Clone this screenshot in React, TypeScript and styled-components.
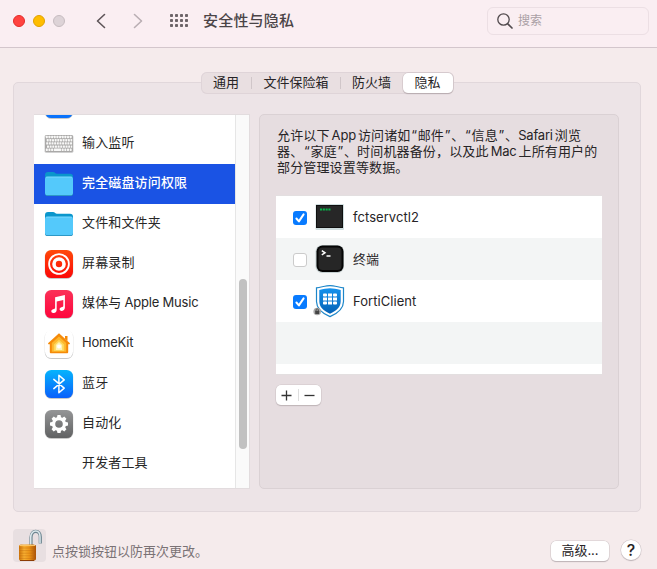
import React from "react";
import styled, { createGlobalStyle, css } from "styled-components";

const GlobalStyle = createGlobalStyle`
  * { box-sizing: border-box; }
  html, body { margin: 0; padding: 0; }
  body {
    font-family: Inter, "Noto Sans CJK SC", sans-serif;
    font-size: 13px;
    line-height: 16px;
    color: #272426;
    overflow: hidden;
  }
  svg { display: block; flex: none; }
  button { font: inherit; color: inherit; border: 0; padding: 0; margin: 0; }
`;

const Window = styled.div`
  width: 657px;
  height: 569px;
  display: flex;
  flex-direction: column;
  background: #f5ebec;
`;

const TitleBar = styled.header`
  height: 48px;
  flex: none;
  display: flex;
  align-items: center;
  padding: 0 8px 6px 13px;
  background: #faeef2;
  border-bottom: 1px solid #d3c6cc;
`;

const Lights = styled.div`
  display: flex;
  gap: 8px;
  margin-right: 31px;
`;

const Light = styled.span<{ $fill: string; $edge: string }>`
  width: 12px;
  height: 12px;
  border-radius: 50%;
  background: ${(p) => p.$fill};
  border: 1px solid ${(p) => p.$edge};
`;

const NavArrows = styled.nav`
  display: flex;
  gap: 27px;
  margin-right: 27px;
`;

const Title = styled.h1`
  margin: 0 auto 0 15px;
  font-size: 15px;
  line-height: 20px;
  font-weight: 500;
  letter-spacing: 0.2px;
  color: #4a4447;
`;

const Search = styled.label`
  width: 162px;
  height: 28px;
  display: flex;
  align-items: center;
  gap: 5px;
  padding-left: 9px;
  border: 1px solid #ecdfe4;
  border-radius: 6px;
  color: #aaa0a5;
  font-size: 12px;
`;

const Content = styled.main`
  flex: none;
  display: flex;
  flex-direction: column;
  padding: 24px 16px 0 13px;
`;

const Tabs = styled.div`
  position: relative;
  z-index: 1;
  align-self: flex-start;
  display: flex;
  width: 253px;
  height: 22px;
  margin: 0 0 -12px 188px;
  padding: 1px 0;
  border-radius: 6px;
  background: #e9dfe1;
  box-shadow: inset 0 0 0 1px #dfd4d8;
`;

const Tab = styled.button<{ $width: number; $active?: boolean; $divider?: boolean }>`
  position: relative;
  width: ${(p) => p.$width}px;
  height: 20px;
  padding-right: 1px;
  line-height: 18px;
  padding-bottom: 2px;
  text-align: center;
  background: none;
  border-radius: 5px;
  ${(p) =>
    p.$active &&
    css`
      background: #fff;
      box-shadow: 0 0 0 0.5px #cdc0c4, 0 1px 1px #a49a9e;
    `}
  ${(p) =>
    p.$divider &&
    css`
      &::after {
        content: "";
        position: absolute;
        right: 0;
        top: 4px;
        width: 1px;
        height: 12px;
        background: #d0c6c9;
      }
    `}
`;

const Panel = styled.section`
  display: flex;
  gap: 9px;
  height: 430px;
  padding: 31px 21px 0 20px;
  background: #ede4e7;
  border: 1px solid #e1d7db;
  border-radius: 5px;
`;

const Sidebar = styled.div`
  display: flex;
  width: 216px;
  height: 375px;
  border: 1px solid #e2dcde;
  border-left: 0;
  background: #fff;
`;

const Categories = styled.ul`
  flex: 1;
  height: 100%;
  margin: 0;
  padding: 0;
  list-style: none;
  overflow: hidden;
  display: flex;
  flex-direction: column;
  justify-content: flex-end;
`;

const Category = styled.li<{ $selected?: boolean }>`
  flex: none;
  height: 40px;
  display: flex;
  align-items: center;
  gap: 8px;
  padding-left: 10px;
  background: ${(p) => (p.$selected ? "#1a53e4" : "#fff")};
  color: ${(p) => (p.$selected ? "#fff" : "#272727")};
  font-weight: ${(p) => (p.$selected ? 500 : 400)};
`;

const CategoryIcon = styled.span`
  width: 30px;
  height: 40px;
  display: flex;
  align-items: center;
  justify-content: center;
`;

const CategoryLabel = styled.span`
  padding-bottom: 4px;
  letter-spacing: 0.15px;
  white-space: nowrap;
`;

const ListTail = styled.div`
  flex: none;
  height: 4px;
`;

const ScrollTrack = styled.div`
  width: 14px;
  padding: 164px 2px 0 3px;
  border-left: 1px solid #e6e6e6;
  background: #fafafa;
`;

const ScrollThumb = styled.div`
  width: 8px;
  height: 170px;
  border-radius: 4px;
  background: #c1c1c1;
`;

const Detail = styled.div`
  width: 360px;
  height: 375px;
  padding: 12px 16px 0;
  background: #e6dde0;
  border: 1px solid #dad1d4;
  border-radius: 5px;
  display: flex;
  flex-direction: column;
  align-items: flex-start;
`;

const Description = styled.p`
  margin: 0 0 20px 1px;
  white-space: nowrap;
  font-size: 13px;
  line-height: 16px;
  letter-spacing: 0.15px;
`;

const DescriptionLine = styled.span`
  display: block;
  height: 16px;
`;

const Latin = styled.span<{ $before?: number; $after?: number }>`
  margin: 0 ${(p) => p.$after ?? 0}px 0 ${(p) => p.$before ?? 0}px;
  letter-spacing: -0.2px;
`;

const Quote = styled.span`
  padding: 0 0.65px;
`;

const AppTable = styled.div`
  width: 326px;
  height: 180px;
  border: 1px solid #e3dfe0;
  border-width: 1px 0;
  background: #fff;
`;

const AppRow = styled.div<{ $shaded?: boolean }>`
  height: 42px;
  display: flex;
  align-items: center;
  padding-left: 17px;
  background: ${(p) => (p.$shaded ? "#f3f5f5" : "#fff")};
`;

const Check = styled.span<{ $on?: boolean }>`
  width: 14px;
  height: 14px;
  margin: 2px 6px 0 0;
  border-radius: 3px;
  display: flex;
  align-items: center;
  justify-content: center;
  background: ${(p) => (p.$on ? "#087bff" : "#fff")};
  border: ${(p) => (p.$on ? "0" : "1px solid #cbcbcb")};
`;

const AppIcon = styled.span`
  width: 34px;
  height: 36px;
  display: flex;
  align-items: center;
`;

const AppName = styled.span`
  padding: 0 0 1px 6px;
  letter-spacing: 0.05px;
`;

const AddRemove = styled.div`
  display: flex;
  align-items: center;
  width: 45px;
  height: 20px;
  margin-top: 10px;
  border-radius: 5px;
  background: #fff;
  box-shadow: 0 0 0 0.5px #cfc5c8, 0 1px 1px #aea5a8;
`;

const Glyph = styled.button<{ $divider?: boolean }>`
  width: 23px;
  height: 12px;
  display: flex;
  align-items: center;
  justify-content: center;
  background: none;
  border-right: ${(p) => (p.$divider ? "1px solid #dedede" : "0")};
`;

const Footer = styled.footer`
  display: flex;
  align-items: flex-start;
  padding: 17px 16px 0 13px;
`;

const LockButton = styled.button`
  width: 33px;
  height: 33px;
  background: #e8dfe1;
  border-radius: 4px;
`;

const LockHint = styled.span`
  margin: 14px auto 0 6px;
  color: #7a7275;
`;

const PushButton = styled.button`
  width: 58px;
  height: 20px;
  margin: 12px 12px 0 0;
  padding-bottom: 2px;
  line-height: 18px;
  border-radius: 5px;
  background: #fff;
  box-shadow: 0 0 0 0.5px #cfc5c8, 0 1px 1px #aea5a8;
`;

const HelpButton = styled(PushButton)`
  width: 20px;
  margin: 11px 0 0;
  padding-bottom: 0;
  line-height: 20px;
  border-radius: 50%;
  font-size: 16px;
  font-weight: 500;
`;

const Chevron = ({ flip, color }: { flip?: boolean; color: string }) => (
  <svg width="10" height="16" viewBox="0 0 10 16" fill="none" stroke={color} strokeWidth="1.6" strokeLinecap="round" strokeLinejoin="round">
    <path d={flip ? "M1.500 1.500 8.500 8 1.500 14.500" : "M8.500 1.500 1.500 8 8.500 14.500"} />
  </svg>
);

const GridDots = () => (
  <svg width="18" height="13" viewBox="0 0 18 13" fill="#6d6468">
    {[0, 5, 10].map((y) => [0, 5, 10, 15].map((x) => <rect key={`${x}-${y}`} x={x} y={y} width="3" height="3" rx=".8" />))}
  </svg>
);

const Tile = ({ id, top, bottom, children }: { id: string; top: string; bottom: string; children?: React.ReactNode }) => (
  <svg width="30" height="31" viewBox="0 0 30 31">
    <defs>
      <linearGradient id={id} x1="0" y1="0" x2="0" y2="1">
        <stop stopColor={top} />
        <stop offset="1" stopColor={bottom} />
      </linearGradient>
    </defs>
    <rect x=".6" y="1.4" width="28.8" height="28.6" rx="6.8" fill="#000" opacity=".12" />
    <rect x="1" y="1.8" width="28" height="28" rx="6.3" fill="#000" opacity=".14" />
    <rect x="1" y="1" width="28" height="28" rx="6.3" fill={`url(#${id})`} />
    {children}
  </svg>
);

const Keyboard = () => (
  <svg width="30" height="20" viewBox="0 0 30 20">
    <rect x=".5" y="1" width="29" height="18" rx="1.8" fill="#d2d2d2" />
    <rect x="1" y="1" width="28" height="17" rx="1.5" fill="#aaa9a8" />
    {[0, 1, 2, 3, 4].map((r) =>
      Array.from({ length: 10 }, (_, c) => {
        const shift = [0, 0.9, 0.4, 1.2, 0][r];
        const x = 1.8 + c * 2.65 + shift;
        const wide = r === 4 && c === 3;
        if (r === 4 && c > 3 && c < 6) return null;
        return <rect key={`${r}-${c}`} x={x} y={1.8 + r * 3.2} width={wide ? 7.4 : Math.min(2, 28.2 - x)} height="2.4" rx=".4" fill="#f8f8f7" />;
      }),
    )}
  </svg>
);

const Folder = () => (
  <svg width="30" height="26" viewBox="0 0 30 26">
    <path d="M1 4.200C1 2 2 1 4 1h5c1.700 0 2.200 1.700 4 1.700h13c2 0 3 1 3 3V20H1z" fill="#0a96cc" />
    <path d="M1 8.200c0-1.700.9-2.600 2.600-2.600h22.800c1.700 0 2.600.9 2.600 2.600v14.200c0 1.800-.9 2.700-2.700 2.700H3.700C1.900 25.100 1 24.200 1 22.400z" fill="#2187b5" />
    <path d="M1 8c0-1.700.9-2.500 2.600-2.500h22.800C28.100 5.500 29 6.300 29 8v13.700c0 1.800-.9 2.600-2.700 2.600H3.700C1.900 24.300 1 23.500 1 21.700z" fill="#54c9fb" />
    <path d="M2 6.200h26" stroke="#83dcff" strokeWidth=".7" />
  </svg>
);

const ScreenRecord = () => (
  <Tile id="record" top="#ff4a0a" bottom="#fc0808">
    <circle cx="15" cy="15" r="9.900" fill="none" stroke="#fff" strokeWidth="1.800" />
    <circle cx="15" cy="15" r="5" fill="none" stroke="#fff" strokeWidth="3.600" />
  </Tile>
);

const Music = () => (
  <Tile id="music" top="#fb3158" bottom="#fe063c">
    <path d="M11.100 8.300 20.900 6v12.600c0 2-1.200 3.100-2.900 3.300-1.500.2-2.500-.6-2.400-1.800.1-1.400 1.300-1.900 2.700-2.200.8-.2 1-.5 1-1.200V11l-6.600 1.500v8c0 2.200-1.100 3.300-2.900 3.500-1.600.2-2.600-.6-2.500-1.900.1-1.300 1.300-1.900 2.700-2.200.8-.2 1.100-.5 1.100-1.300z" fill="#fff" />
  </Tile>
);

const HomeKit = () => (
  <Tile id="home" top="#fff" bottom="#fff">
    <path d="M15 4.200 25.700 14c.5.6.1 1.300-.5 1.300h-1V23c0 .8-.5 1.300-1.300 1.300H7.100c-.8 0-1.300-.5-1.300-1.300v-7.700h-1c-.7 0-1-.8-.5-1.300z" fill="#f58a09" />
    <path d="M21 7h2.500v5L21 10z" fill="#f58a09" />
    <path d="m15 7.500 7.200 6.600v8.600H7.800v-8.600z" fill="#fdb72c" />
    <path d="m15 10.800 5.200 4.600v6.500H9.800v-6.500z" fill="#fed65b" />
    <path d="m15 13 3.200 3v5h-6.400v-5z" fill="#fff3b5" />
    <circle cx="15" cy="17.400" r="2" fill="#fff" />
  </Tile>
);

const Bluetooth = () => (
  <Tile id="bluetooth" top="#05b4fd" bottom="#0a60fb">
    <path d="m9.800 10.400 10.400 8.700-5.300 4.700V6.200l5.300 4.700L9.800 19.600" fill="none" stroke="#fff" strokeWidth="1.500" strokeLinejoin="round" strokeLinecap="round" />
  </Tile>
);

const Gear = () => (
  <Tile id="gear" top="#959697" bottom="#616263">
    <g fill="#fff">
      {[0, 45, 90, 135, 180, 225, 270, 315].map((a) => (
        <path key={a} d="M12.800 9 13.500 6h3l.7 3z" transform={`rotate(${a} 15 15)`} />
      ))}
    </g>
    <circle cx="15" cy="15" r="5.400" fill="none" stroke="#fff" strokeWidth="3.200" />
  </Tile>
);

const ExecIcon = () => (
  <svg width="32" height="30" viewBox="0 0 32 30">
    <rect x="2.500" y="2" width="28.500" height="26" rx="1" fill="#a9c3c4" opacity=".55" />
    <rect x="3" y="3" width="27" height="23" fill="#0f0f0f" />
    <rect x="4" y="4" width="25" height="21" fill="#272727" />
    <path d="M7 7.500h11" stroke="#08b54a" strokeWidth="2.200" strokeDasharray="2.100 .7" />
  </svg>
);

const TerminalIcon = () => (
  <svg width="32" height="30" viewBox="0 0 32 30">
    <rect x="2.500" y="1" width="28.500" height="28" rx="6.500" fill="#9fb1b3" opacity=".55" />
    <rect x="3.500" y="1.500" width="27" height="26.500" rx="6" fill="#050505" />
    <rect x="5.500" y="3.500" width="23" height="22.500" rx="4" fill="#262626" />
    <path d="m8.800 6.700 3.200 2.100-3.200 2.100M13.500 12h4" fill="none" stroke="#fff" strokeWidth="1.500" />
  </svg>
);

const FortiIcon = () => (
  <svg width="32" height="36" viewBox="0 0 32 36">
    <defs>
      <linearGradient id="shield" x1="0" y1="0" x2="0" y2="1">
        <stop stopColor="#1592ee" />
        <stop offset="1" stopColor="#0561b4" />
      </linearGradient>
    </defs>
    <path d="M17 2.600c3.500 0 7.500 1.200 13.500 2.200v13.600c0 7-5.300 11.600-13.500 15.200C8.800 30 3.500 25.400 3.500 18.400V4.800C9.500 3.800 13.500 2.600 17 2.600z" fill="#fff" stroke="#1d86c9" strokeWidth="1.200" />
    <path d="M17 5.200c3.300 0 6.400.9 10.700 1.700v11.400c0 5.700-4.100 9.400-10.700 12.500C10.400 27.700 6.300 24 6.300 18.300V6.900C10.600 6.100 13.700 5.200 17 5.200z" fill="url(#shield)" />
    <g fill="#fff">
      {[0, 1, 2].map((r) =>
        [0, 1, 2].map((c) => (
          <rect key={`${r}-${c}`} x={10 + c * 5} y={10.500 + r * 4} width="4" height="3" rx={r !== 1 && c !== 1 ? 0.9 : 0} />
        )),
      )}
    </g>
    <circle cx="4.200" cy="28.500" r="3.800" fill="#a9a9a9" />
    <rect x="2.200" y="27.700" width="4" height="3.300" rx=".5" fill="#444" />
    <path d="M3 28v-1a1.200 1.200 0 0 1 2.400 0v1" fill="none" stroke="#444" strokeWidth=".8" />
  </svg>
);

const OpenLock = () => (
  <svg width="33" height="33" viewBox="0 0 33 33">
    <defs>
      <linearGradient id="brass" x1="0" x2="1">
        <stop stopColor="#ce7309" />
        <stop offset=".3" stopColor="#f7af32" />
        <stop offset=".6" stopColor="#ee9719" />
        <stop offset="1" stopColor="#a85008" />
      </linearGradient>
    </defs>
    <path d="M18 16V8.500C18 4.500 20 2.300 22.700 2.300S27.300 4.500 27.300 8v6.500" fill="none" stroke="#6d8590" strokeWidth="3.200" />
    <path d="M17.700 16V8.500C17.700 4.500 20 2.100 22.700 2.100S27 4.500 27 8v6.300" fill="none" stroke="#dce9ed" strokeWidth="1.500" />
    <path d="M6 17c0-1 1-1.500 3-1.500h10c2.500 0 4 .5 4 1.500v13c0 1.300-2 2-4 2H9c-2 0-3-.7-3-2z" fill="url(#brass)" />
    <path d="M6 19h17M6 21.600h17M6 24.200h17M6 26.800h17M6 29.400h17" stroke="#b9630c" strokeWidth=".6" opacity=".6" />
    <path d="M6.500 16.500h15.500" stroke="#fbc564" />
    <path d="M7 31.500h14" stroke="#8c3d06" />
  </svg>
);

const CheckMark = () => (
  <svg width="14" height="14" viewBox="0 0 14 14" fill="none" stroke="#fff" strokeWidth="2" strokeLinecap="round" strokeLinejoin="round">
    <path d="m3.400 7.500 2.500 2.900 4.700-7" />
  </svg>
);

const CATEGORIES = [
  { label: "", icon: <Tile id="access" top="#0a93ff" bottom="#0a70fb" /> },
  { label: "输入监听", icon: <Keyboard /> },
  { label: "完全磁盘访问权限", icon: <Folder />, selected: true },
  { label: "文件和文件夹", icon: <Folder /> },
  { label: "屏幕录制", icon: <ScreenRecord /> },
  { label: <>媒体与<Latin $before={3}>Apple Music</Latin></>, icon: <Music /> },
  { label: <Latin>HomeKit</Latin>, icon: <HomeKit /> },
  { label: "蓝牙", icon: <Bluetooth /> },
  { label: "自动化", icon: <Gear /> },
  { label: "开发者工具", icon: null },
];

const APPS = [
  { name: "fctservctl2", icon: <ExecIcon />, on: true },
  { name: "终端", icon: <TerminalIcon />, on: false },
  { name: "FortiClient", icon: <FortiIcon />, on: true },
];

export default function App() {
  return (
    <Window>
      <GlobalStyle />
      <TitleBar>
        <Lights>
          <Light $fill="#ff4340" $edge="#e32b29" />
          <Light $fill="#ffbd00" $edge="#e0a100" />
          <Light $fill="#ddd3d7" $edge="#c6bcc0" />
        </Lights>
        <NavArrows>
          <Chevron color="#5d5458" />
          <Chevron flip color="#b9aeb3" />
        </NavArrows>
        <GridDots />
        <Title>安全性与隐私</Title>
        <Search>
          <svg width="16" height="16" viewBox="0 0 16 16" fill="none" stroke="#514a4d" strokeLinecap="round">
            <circle cx="6.500" cy="6.500" r="5.700" strokeWidth="1.300" />
            <path d="m10.800 10.800 4.200 4.200" strokeWidth="1.700" />
          </svg>
          搜索
        </Search>
      </TitleBar>
      <Content>
        <Tabs>
          <Tab $width={51} $divider>通用</Tab>
          <Tab $width={89} $divider>文件保险箱</Tab>
          <Tab $width={62}>防火墙</Tab>
          <Tab $width={50} $active>隐私</Tab>
        </Tabs>
        <Panel>
          <Sidebar>
            <Categories>
              {CATEGORIES.map((c, i) => (
                <Category key={i} $selected={c.selected}>
                  <CategoryIcon>{c.icon}</CategoryIcon>
                  <CategoryLabel>{c.label}</CategoryLabel>
                </Category>
              ))}
              <ListTail />
            </Categories>
            <ScrollTrack>
              <ScrollThumb />
            </ScrollTrack>
          </Sidebar>
          <Detail>
            <Description>
              <DescriptionLine>
                允许以下<Latin $before={2} $after={2}>App</Latin>访问诸如<Quote>“</Quote>邮件<Quote>”</Quote>、<Quote>“</Quote>信息<Quote>”</Quote>、<Latin $after={2}>Safari</Latin>浏览
              </DescriptionLine>
              <DescriptionLine>
                器、<Quote>“</Quote>家庭<Quote>”</Quote>、时间机器备份，以及此<Latin $before={2} $after={2}>Mac</Latin>上所有用户的
              </DescriptionLine>
              <DescriptionLine>部分管理设置等数据。</DescriptionLine>
            </Description>
            <AppTable>
              {APPS.map((a, i) => (
                <AppRow key={a.name} $shaded={i % 2 === 1}>
                  <Check $on={a.on}>{a.on && <CheckMark />}</Check>
                  <AppIcon>{a.icon}</AppIcon>
                  <AppName>{a.name}</AppName>
                </AppRow>
              ))}
              <AppRow $shaded />
            </AppTable>
            <AddRemove>
              <Glyph $divider>
                <svg width="11" height="11" viewBox="0 0 11 11" stroke="#333" strokeWidth="1.300">
                  <path d="M.5 5.500h10M5.500.5v10" />
                </svg>
              </Glyph>
              <Glyph>
                <svg width="11" height="11" viewBox="0 0 11 11" stroke="#333" strokeWidth="1.300">
                  <path d="M.5 5.500h10" />
                </svg>
              </Glyph>
            </AddRemove>
          </Detail>
        </Panel>
      </Content>
      <Footer>
        <LockButton>
          <OpenLock />
        </LockButton>
        <LockHint>点按锁按钮以防再次更改。</LockHint>
        <PushButton>高级...</PushButton>
        <HelpButton>?</HelpButton>
      </Footer>
    </Window>
  );
}
